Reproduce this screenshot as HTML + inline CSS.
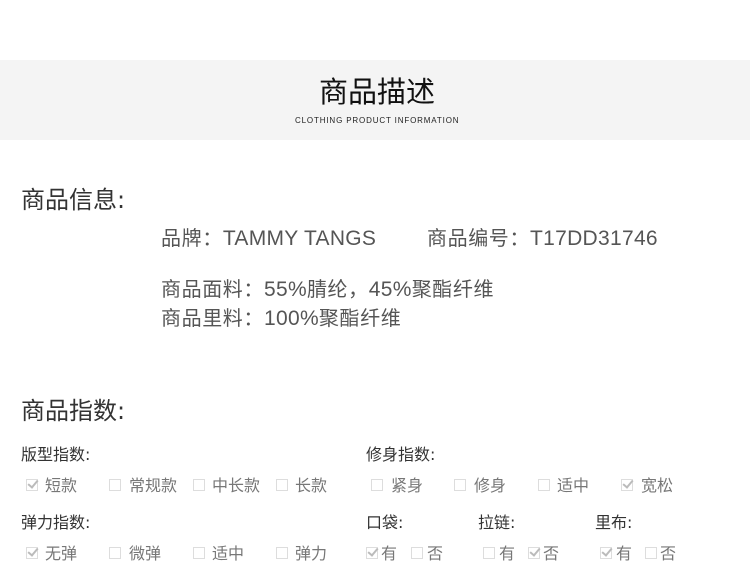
<!DOCTYPE html><html><head><meta charset="utf-8"><style>
*{margin:0;padding:0}
body{width:750px;height:565px;background:#fff;position:relative;overflow:hidden;font-family:"DejaVu Sans","Noto Sans CJK SC",sans-serif;color:#333}
.a{position:absolute;white-space:nowrap;line-height:1}
.band{position:absolute;left:0;top:60px;width:750px;height:80px;background:#f4f4f4}
.h{font-size:24px;color:#333}
.r{font-size:20px;color:#555;font-family:"Noto Sans CJK SC",sans-serif;letter-spacing:0.6px}
.r i{font-style:normal;font-size:21px;font-family:"Liberation Sans",sans-serif;letter-spacing:0.3px}
.l{font-size:16px;color:#333}
.o{font-size:16px;color:#777;font-family:"Noto Sans CJK SC",sans-serif}
.cb{position:absolute;width:10px;height:10px;border:1px solid #ddd;background:#fff}
.ck:after{content:"";position:absolute;left:3px;top:-2px;width:4px;height:8px;border:solid #bbb;border-width:0 2px 2px 0;transform:rotate(40deg)}
</style></head><body>
<div class="band"></div>
<div class="a" style="left:319px;top:76px;font-size:29px;color:#111;font-family:'Noto Sans CJK SC',sans-serif">商品描述</div>
<div class="a" style="left:295px;top:117px;font-size:8px;color:#222;letter-spacing:0.85px;font-family:'Liberation Sans',sans-serif">CLOTHING PRODUCT INFORMATION</div>
<div class="a h" style="left:21px;top:188px">商品信息:</div>
<div class="a r" style="left:161px;top:227px">品牌：<i>TAMMY TANGS</i></div>
<div class="a r" style="left:427px;top:227px">商品编号：<i>T17DD31746</i></div>
<div class="a r" style="left:161px;top:278px">商品面料：<i>55%</i>腈纶，<i>45%</i>聚酯纤维</div>
<div class="a r" style="left:161px;top:307px">商品里料：<i>100%</i>聚酯纤维</div>
<div class="a h" style="left:21px;top:399px">商品指数:</div>
<div class="a l" style="left:21px;top:447px">版型指数:</div>
<div class="a l" style="left:366px;top:447px">修身指数:</div>
<div class="a l" style="left:21px;top:515px">弹力指数:</div>
<div class="a l" style="left:366px;top:515px">口袋:</div>
<div class="a l" style="left:478px;top:515px">拉链:</div>
<div class="a l" style="left:595px;top:515px">里布:</div>

<div class="cb ck" style="left:26px;top:479px"></div><div class="a o" style="left:45px;top:476px">短款</div>
<div class="cb" style="left:109px;top:479px"></div><div class="a o" style="left:129px;top:476px">常规款</div>
<div class="cb" style="left:193px;top:479px"></div><div class="a o" style="left:212px;top:476px">中长款</div>
<div class="cb" style="left:276px;top:479px"></div><div class="a o" style="left:295px;top:476px">长款</div>
<div class="cb" style="left:371px;top:479px"></div><div class="a o" style="left:391px;top:476px">紧身</div>
<div class="cb" style="left:454px;top:479px"></div><div class="a o" style="left:474px;top:476px">修身</div>
<div class="cb" style="left:538px;top:479px"></div><div class="a o" style="left:557px;top:476px">适中</div>
<div class="cb ck" style="left:621px;top:479px"></div><div class="a o" style="left:641px;top:476px">宽松</div>

<div class="cb ck" style="left:26px;top:547px"></div><div class="a o" style="left:45px;top:544px">无弹</div>
<div class="cb" style="left:109px;top:547px"></div><div class="a o" style="left:129px;top:544px">微弹</div>
<div class="cb" style="left:193px;top:547px"></div><div class="a o" style="left:212px;top:544px">适中</div>
<div class="cb" style="left:276px;top:547px"></div><div class="a o" style="left:295px;top:544px">弹力</div>
<div class="cb ck" style="left:366px;top:547px"></div><div class="a o" style="left:381px;top:544px">有</div>
<div class="cb" style="left:411px;top:547px"></div><div class="a o" style="left:427px;top:544px">否</div>
<div class="cb" style="left:483px;top:547px"></div><div class="a o" style="left:499px;top:544px">有</div>
<div class="cb ck" style="left:528px;top:547px"></div><div class="a o" style="left:543px;top:544px">否</div>
<div class="cb ck" style="left:600px;top:547px"></div><div class="a o" style="left:616px;top:544px">有</div>
<div class="cb" style="left:645px;top:547px"></div><div class="a o" style="left:660px;top:544px">否</div>
</body></html>
